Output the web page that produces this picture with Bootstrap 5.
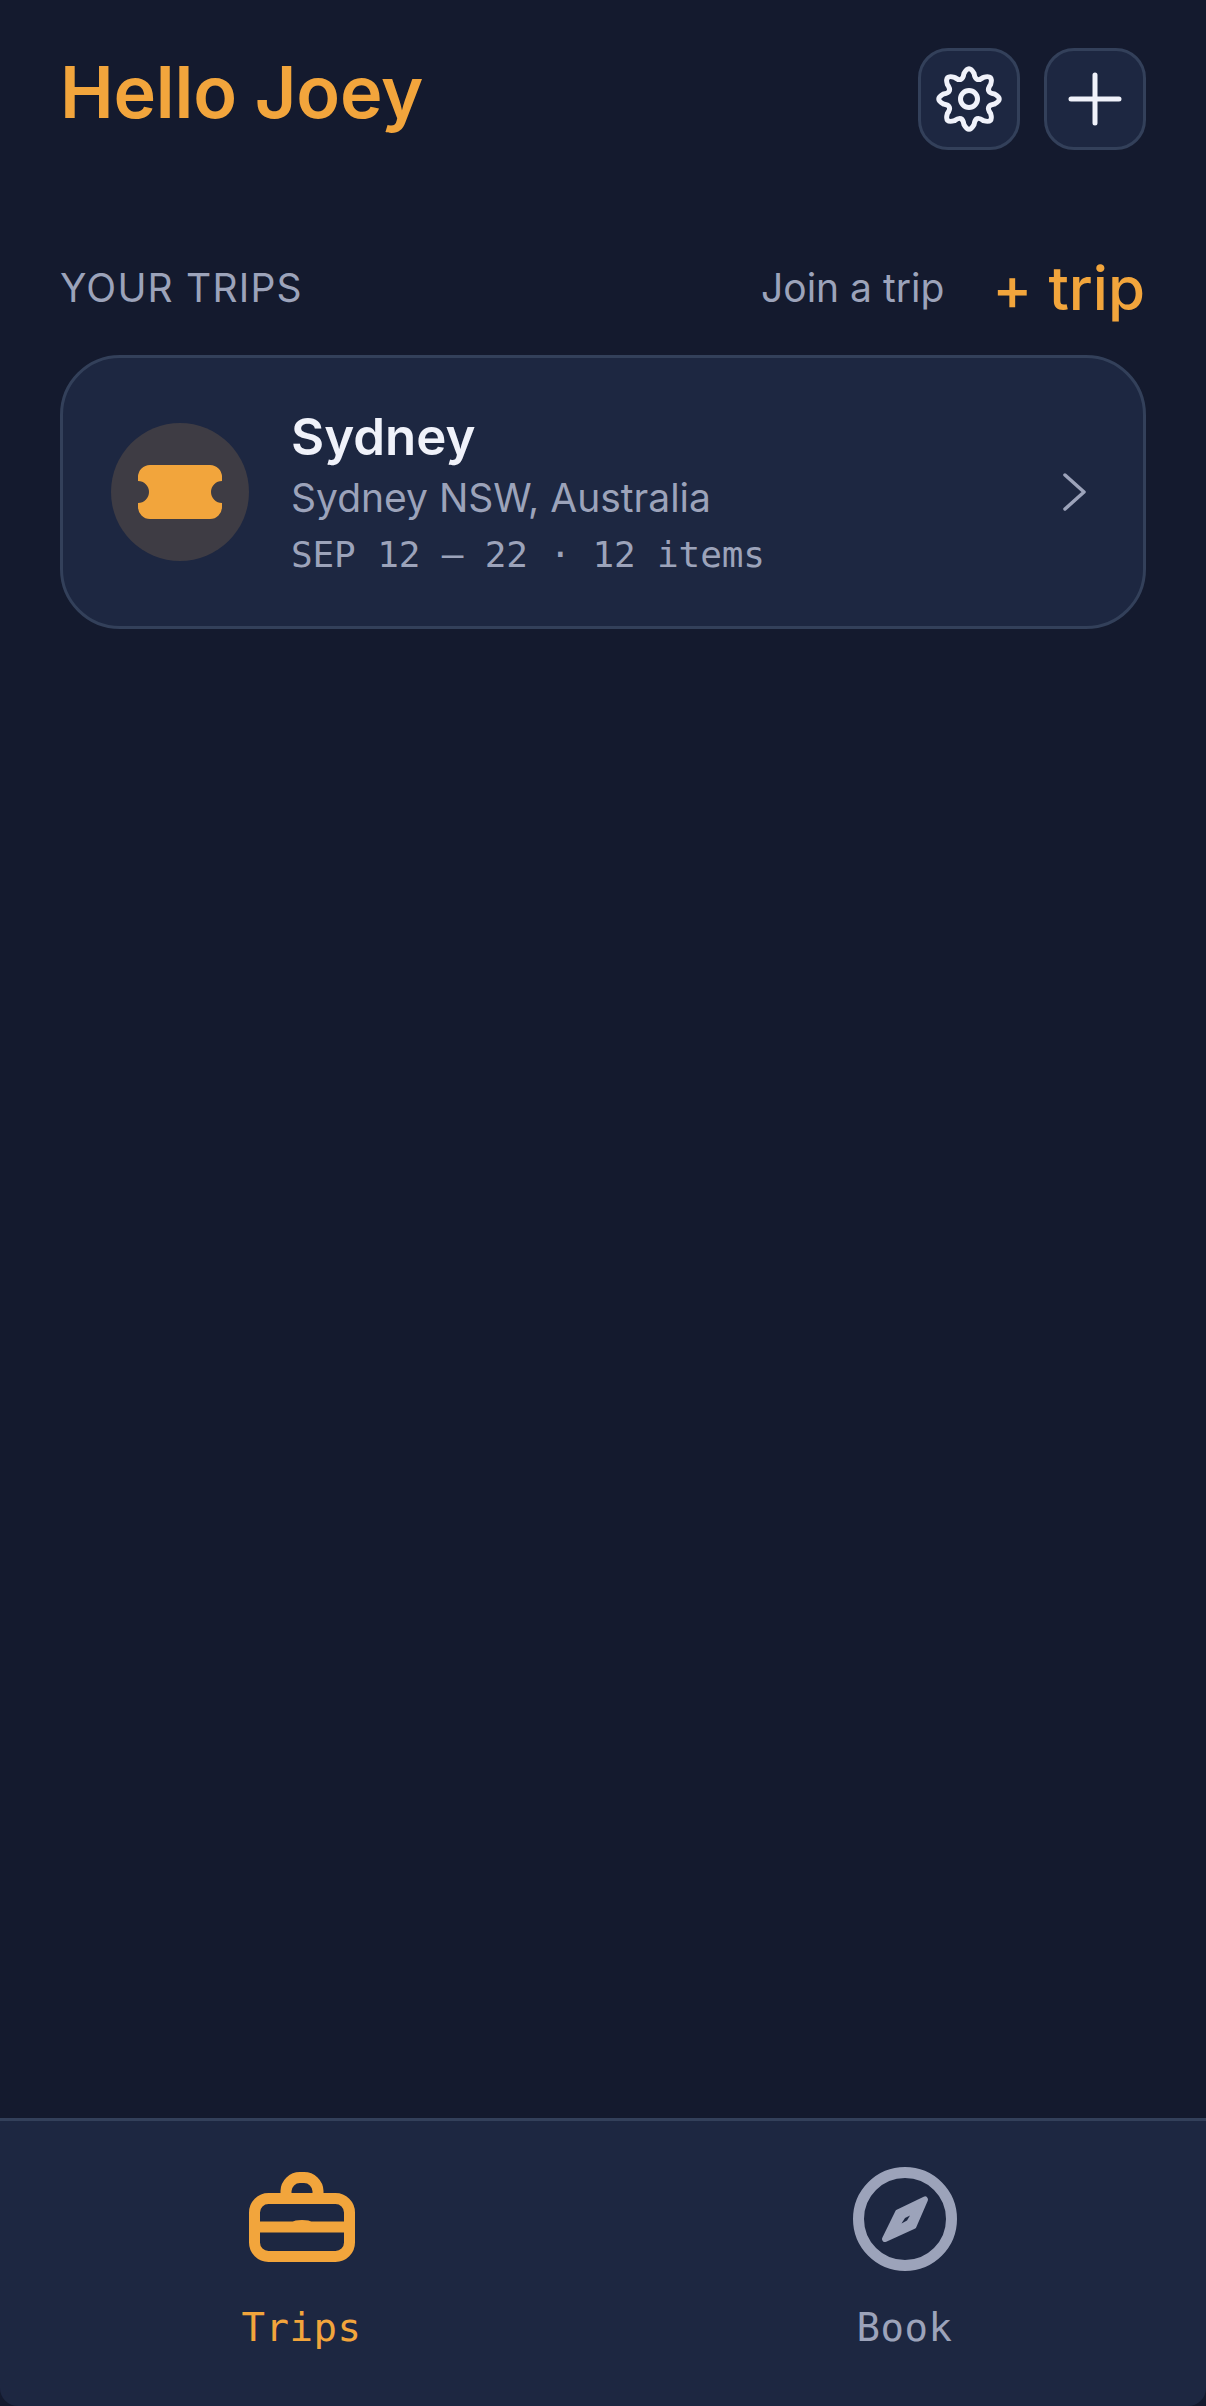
<!DOCTYPE html>
<html lang="en">
  <head>
    <meta charset="UTF-8" />
    <title>Trips</title>
    <link
      href="https://cdn.jsdelivr.net/npm/bootstrap@5.3.2/dist/css/bootstrap.min.css"
      rel="stylesheet"
    />
    <style>
      body {
        background: #141a2e;
        font-family: Inter, "Noto Sans", sans-serif;
        color: #9ca3ba;
      }
      .app-shell {
        height: 2406px;
      }
      .top-bar {
        padding: 48px 60px 0;
      }
      .hello-title {
        margin: 0;
        font-size: 72px;
        line-height: 88px;
        font-weight: 600;
        letter-spacing: -0.2px;
        color: #f2a53c;
      }
      .icon-tile {
        width: 102px;
        height: 102px;
        padding: 0;
        background: #1d2741;
        border: 3px solid #33405a;
        border-radius: 30px;
      }
      .section-head {
        padding: 0 60px;
        margin-top: 98px;
        height: 80px;
      }
      .section-label {
        font-size: 39px;
        letter-spacing: 1.2px;
      }
      .join-link {
        font-size: 39px;
        color: #9ca3ba;
        text-decoration: none;
      }
      .new-trip {
        margin-right: 1px;
        font-size: 60px;
        line-height: 70px;
        font-weight: 500;
        color: #f2a53c;
        text-decoration: none;
      }
      .trip-tile {
        margin: 27px 60px 0;
        height: 274px;
        padding: 0 57px 0 48px;
        background: #1d2741;
        border: 3px solid #33405a;
        border-radius: 60px;
      }
      .trip-badge {
        width: 138px;
        height: 138px;
        margin-right: 42px;
        background: #3e3c44;
      }
      .trip-copy {
        padding-top: 4px;
      }
      .trip-name {
        font-size: 51px;
        line-height: 64px;
        font-weight: 600;
        color: #f0f2fa;
      }
      .trip-place {
        font-size: 39px;
        line-height: 58px;
      }
      .trip-dates {
        font-family: "DejaVu Sans Mono", "Liberation Mono", monospace;
        font-size: 36px;
        line-height: 56px;
        letter-spacing: -0.14px;
      }
      .tab-bar {
        height: 288px;
        background: #1d2741;
        border-top: 3px solid #33405a;
        border-radius: 0 0 18px 18px;
      }
      .tab-item {
        padding-top: 44px;
        text-decoration: none;
        color: #9ca3ba;
      }
      .tab-item.is-active {
        color: #f2a53c;
      }
      .tab-label {
        font-family: "DejaVu Sans Mono", "Liberation Mono", monospace;
        font-size: 39px;
        line-height: 48px;
        margin-top: 31px;
        letter-spacing: .5px;
      }
    </style>
  </head>
  <body>
    <div class="app-shell d-flex flex-column">
      <!-- Header -->
      <div class="top-bar d-flex justify-content-between align-items-start">
        <h1 class="hello-title">Hello Joey</h1>
        <div class="d-flex gap-4">
          <button class="icon-tile d-flex align-items-center justify-content-center" aria-label="Settings">
            <svg width="66" height="66" viewBox="0 0 66 66" fill="none" stroke="#f0f2fa" stroke-width="5" stroke-linejoin="round">
              <path d="M27.93 7.5Q33 -2 38.07 7.5Q39.5 17.3 47.45 11.38Q57.75 8.25 54.62 18.55Q48.7 26.5 58.5 27.93Q68 33 58.5 38.07Q48.7 39.5 54.62 47.45Q57.75 57.75 47.45 54.62Q39.5 48.7 38.07 58.5Q33 68 27.93 58.5Q26.5 48.7 18.55 54.62Q8.25 57.75 11.38 47.45Q17.3 39.5 7.5 38.07Q-2 33 7.5 27.93Q17.3 26.5 11.38 18.55Q8.25 8.25 18.55 11.38Q26.5 17.3 27.93 7.5Z" />
              <circle cx="33" cy="33" r="8.5" />
            </svg>
          </button>
          <button class="icon-tile d-flex align-items-center justify-content-center" aria-label="Add">
            <svg width="54" height="54" viewBox="0 0 54 54" fill="none" stroke="#f0f2fa" stroke-width="5" stroke-linecap="round">
              <path d="M27 3v48M3 27h48" />
            </svg>
          </button>
        </div>
      </div>

      <!-- Section title -->
      <div class="section-head d-flex justify-content-between align-items-center">
        <span class="section-label">YOUR TRIPS</span>
        <div class="d-flex align-items-center gap-5">
          <a href="#" class="join-link">Join a trip</a>
          <a href="#" class="new-trip">+ trip</a>
        </div>
      </div>

      <!-- Trip -->
      <div class="trip-tile d-flex align-items-center">
        <div class="trip-badge rounded-circle d-flex align-items-center justify-content-center flex-shrink-0">
          <svg width="84" height="54" viewBox="0 0 84 54">
            <path fill="#f2a53c" d="M12 0H72A12 12 0 0 1 84 12V16A11 11 0 0 0 84 38V42A12 12 0 0 1 72 54H12A12 12 0 0 1 0 42V38A11 11 0 0 0 0 16V12A12 12 0 0 1 12 0Z" />
          </svg>
        </div>
        <div class="trip-copy flex-grow-1">
          <div class="trip-name">Sydney</div>
          <div class="trip-place">Sydney NSW, Australia</div>
          <div class="trip-dates">SEP 12 — 22 · 12 items</div>
        </div>
        <svg width="24" height="38" viewBox="0 0 24 38" fill="none" stroke="#9ca3ba" stroke-width="3.5" stroke-linecap="round" stroke-linejoin="round">
          <path d="M3 2l19 17L3 36" />
        </svg>
      </div>

      <div class="flex-grow-1"></div>

      <!-- Bottom tabs -->
      <div class="tab-bar d-flex">
        <a href="#" class="tab-item is-active w-50 d-flex flex-column align-items-center">
          <svg width="108" height="108" viewBox="0 0 108 108" fill="none" stroke="#f2a53c" stroke-width="11" stroke-linejoin="round">
            <rect x="6.5" y="33.5" width="95" height="58" rx="14" />
            <path d="M38 33V26A14 14 0 0 1 52 12.5H56A14 14 0 0 1 70 26V33" />
            <path d="M6 62H102" />
            <ellipse cx="54" cy="57" rx="9" ry="2" fill="#f2a53c" stroke="none" />
          </svg>
          <span class="tab-label">Trips</span>
        </a>
        <a href="#" class="tab-item w-50 d-flex flex-column align-items-center">
          <svg width="108" height="108" viewBox="0 0 108 108" fill="none">
            <circle cx="54" cy="54" r="46.5" stroke="#9ca3ba" stroke-width="11" />
            <path fill="#9ca3ba" stroke="#9ca3ba" stroke-width="6" stroke-linejoin="round" d="M74 34.5L62.5 61 34 74 47 47.5Z" />
            <path fill="#1d2741" d="M59 50.5L54 53 50.5 58.5 56 55.5Z" />
          </svg>
          <span class="tab-label">Book</span>
        </a>
      </div>
    </div>
  </body>
</html>
